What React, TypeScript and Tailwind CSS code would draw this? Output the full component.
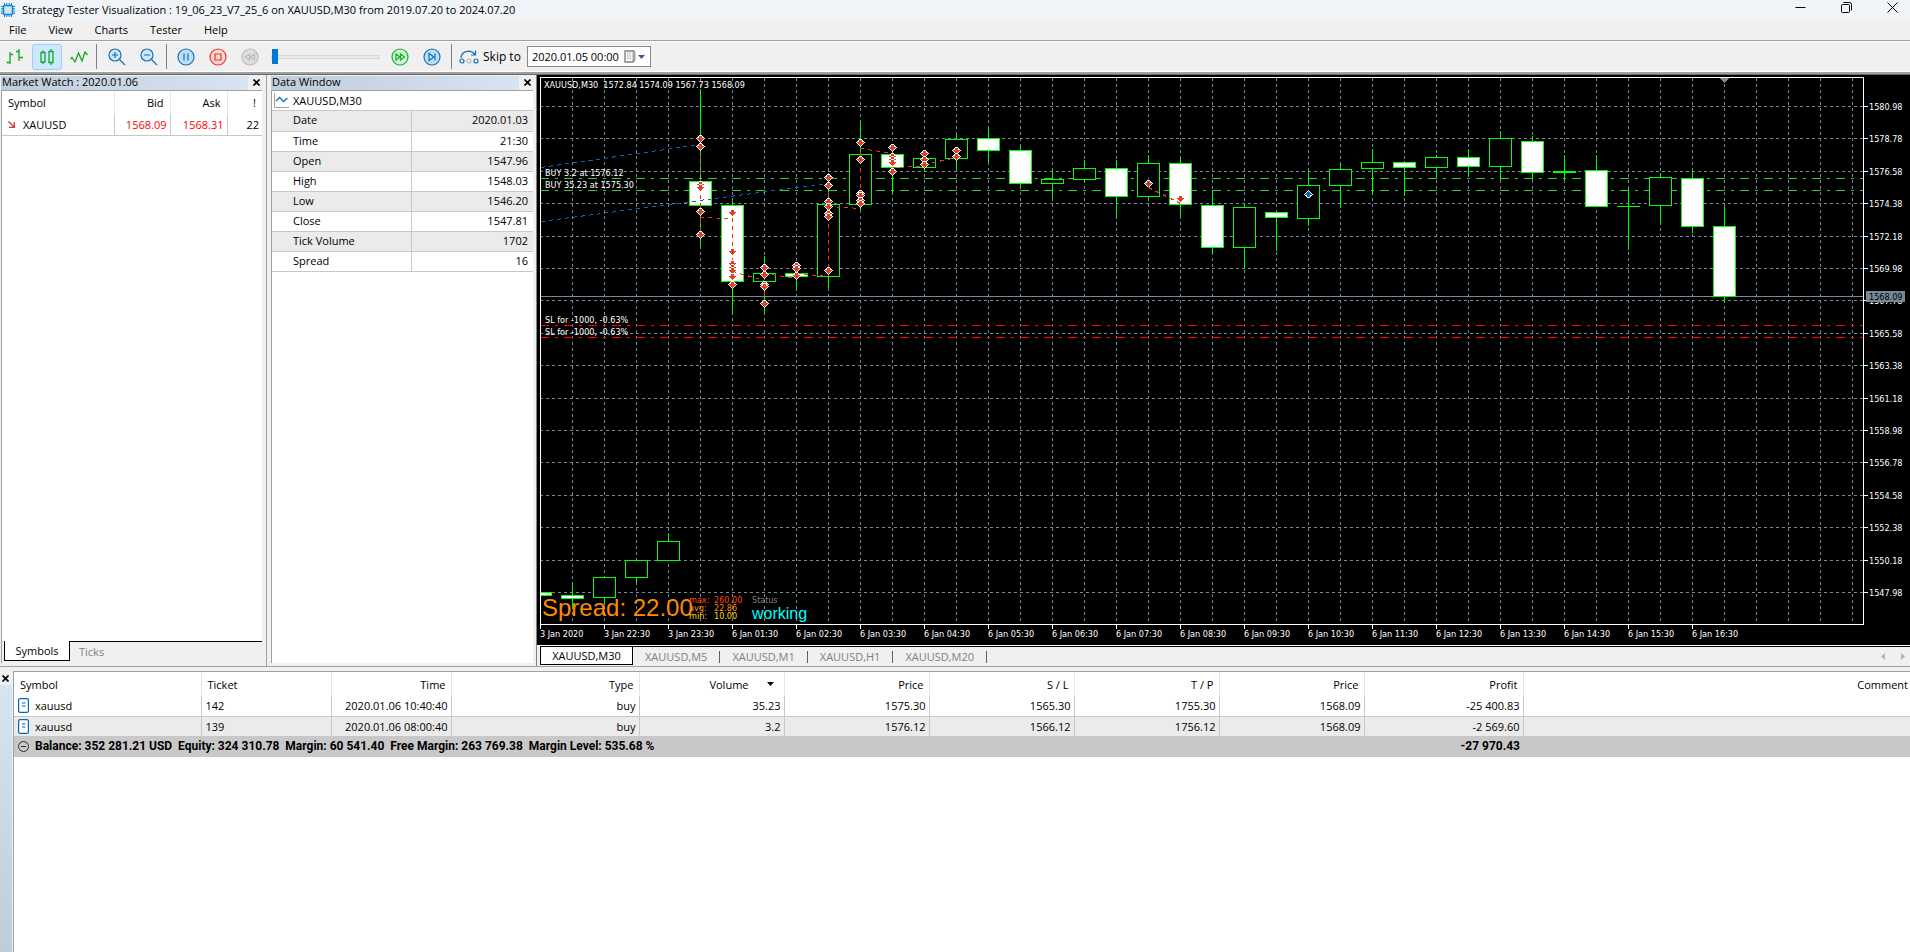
import React, { useState } from "react";

const GREEN = "#00ff00";
const SLATE = "#778899";
const SELL = "#e04020";
const BUY = "#0a64b4";

// bar: [high, bodyTop, bodyBottom, low, bearish]
type Bar = [number, number, number, number, boolean];

const bars: Bar[] = [
  [592, 592, 595, 595, true],
  [583, 595, 598, 608, true],
  [577, 577, 597, 604, false],
  [560, 560, 577, 583, false],
  [533, 541, 560, 560, false],
  [89, 181, 205, 245, true],
  [201, 205, 281, 313, true],
  [256, 273, 281, 313, false],
  [263, 273, 276, 289, true],
  [173, 204, 276, 287, false],
  [121, 154, 204, 209, false],
  [145, 154, 167, 193, true],
  [152, 158, 167, 171, false],
  [135, 139, 158, 169, false],
  [128, 138, 150, 161, true],
  [145, 150, 183, 187, true],
  [171, 179, 183, 197, false],
  [160, 168, 179, 182, false],
  [160, 168, 196, 217, true],
  [155, 163, 196, 198, false],
  [158, 163, 204, 216, true],
  [191, 205, 247, 253, true],
  [205, 207, 247, 267, false],
  [212, 212, 217, 250, true],
  [171, 185, 218, 225, false],
  [164, 169, 185, 207, false],
  [149, 162, 168, 194, false],
  [161, 162, 167, 195, true],
  [155, 157, 167, 177, false],
  [149, 157, 166, 175, true],
  [131, 138, 166, 179, false],
  [136, 141, 172, 179, true],
  [155, 171, 172, 180, false],
  [155, 170, 206, 206, true],
  [189, 206, 206, 249, false],
  [173, 177, 205, 221, false],
  [170, 178, 226, 232, true],
  [207, 226, 296, 302, true],
];

// sells: bar index -> levels
const sells: [number, number[]][] = [
  [5, [139, 147, 185, 188, 212, 235]],
  [6, [213, 252, 264, 268, 271, 277, 285]],
  [7, [268, 275, 285, 287, 304]],
  [8, [266, 269, 276]],
  [9, [178, 186, 202, 207, 214, 217, 271]],
  [10, [143, 160, 194, 196, 201, 204]],
  [11, [148, 157, 160, 163, 172]],
  [12, [154, 160, 165]],
  [13, [151, 157]],
  [19, [184]],
  [20, [199]],
];

const sellLinks = [
  "M700.5 147V235",
  "M700.5 217.5L732.5 218.5",
  "M732.5 218V285",
  "M732.5 271.5L764.5 280.5",
  "M764.5 268V308",
  "M764.5 273.5L796.5 278.5",
  "M796.5 273.5L828.5 276.5",
  "M828.5 276V186",
  "M828.5 206.5L860.5 208.5",
  "M860.5 204V148",
  "M860.5 148.5L892.5 153.5",
  "M892.5 154V172",
  "M892.5 167.5L924.5 166.5",
  "M924.5 164.5L956.5 157.5",
  "M1148.5 187.5L1180.5 203.5",
];

const barX = (i: number) => 540 + i * 32;
const gridY = (i: number) => 106 + Math.round(i * 32.4);

const prices = Array.from({ length: 16 }, (_, i) => (1580.98 - i * 2.2).toFixed(2));
const times = [
  "3 Jan 2020",
  "3 Jan 22:30",
  "3 Jan 23:30",
  ...Array.from({ length: 16 }, (_, i) => `6 Jan ${String(i + 1).padStart(2, "0")}:30`),
];

function Arrow({ x, y, color, up }: { x: number; y: number; color: string; up?: boolean }) {
  return (
    <g transform={`translate(${x} ${y})${up ? " scale(1 -1)" : ""}`}>
      <path
        d="M-1 -4H2V-3H3V-2H4V-1H5V0H4V1H3V2H2V3H1V4H0V3H-1V2H-2V1H-3V0H-4V-1H-3V-2H-2V-3H-1Z"
        fill="#fff"
      />
      <path d="M-1 -3H2V-1H4V0H3V1H2V2H1V3H0V2H-1V1H-2V0H-3V-1H-1Z" fill={color} />
    </g>
  );
}

function Chart() {
  return (
    <svg
      viewBox="537 75 1373 570"
      className="block w-full h-auto bg-black font-['DejaVu_Sans_Condensed','DejaVu_Sans',sans-serif] text-[9px]"
      shapeRendering="crispEdges"
      role="img"
      aria-label="XAUUSD M30 chart"
    >
      <defs>
        <clipPath id="plot">
          <rect x="541" y="78" width="1322" height="546" />
        </clipPath>
      </defs>

      <g stroke={SLATE} strokeDasharray="3 3">
        {Array.from({ length: 41 }, (_, i) => (
          <line key={i} x1={barX(i + 1) + 0.5} x2={barX(i + 1) + 0.5} y1="78" y2="624" />
        ))}
        {prices.map((p, i) => (
          <line key={p} x1="540" x2="1863" y1={gridY(i) + 0.5} y2={gridY(i) + 0.5} />
        ))}
      </g>

      <g strokeDasharray="9 6 3 6">
        <path d="M540 178.5H1863M540 190.5H1863" stroke="#32cd32" />
        <path d="M540 325.5H1863M540 337.5H1863" stroke="#ff0000" />
      </g>
      <path d="M540 296.5H1863" stroke={SLATE} />

      <g clipPath="url(#plot)">
        {bars.map(([high, top, bottom, low, bearish], i) => {
          const x = barX(i);
          return (
            <g key={i} stroke={GREEN}>
              <line x1={x + 0.5} x2={x + 0.5} y1={high} y2={low + 1} />
              <rect
                x={x - 10.5}
                y={top + 0.5}
                width="22"
                height={bottom - top}
                fill={bearish ? "#fff" : "#000"}
              />
              {bottom === top && <line x1={x - 11} x2={x + 12} y1={top + 0.5} y2={top + 0.5} />}
            </g>
          );
        })}

        <g fill="none" strokeDasharray="4 4">
          <path d="M541 167.5L700 144.5M541 221.5L828 183.5" stroke={BUY} />
          {sellLinks.map((d) => (
            <path key={d} d={d} stroke={SELL} />
          ))}
        </g>

        {sells.map(([i, levels]) =>
          levels.map((y) => <Arrow key={`${i}-${y}`} x={barX(i)} y={y} color={SELL} />)
        )}
        <path d="M1148.5 177V188" stroke={BUY} strokeDasharray="3 2" />
        <Arrow x={barX(24)} y={194} color={BUY} up />
      </g>

      <path d="M1720 78H1729L1724.5 83Z" fill={SLATE} />

      <path d="M540.5 624V77.5H1863.5V624.5H540" fill="none" stroke="#fff" />

      <g fill="#fff">
        {prices.map((p, i) => (
          <g key={p}>
            <rect x="1864" y={gridY(i)} width="4" height="1" />
            <text x="1869" y={gridY(i) + 4}>{p}</text>
          </g>
        ))}
        {times.map((t, i) => (
          <g key={t}>
            <rect x={540 + i * 64} y="625" width="1" height="4" />
            <text x={540 + i * 64} y="637">{t}</text>
          </g>
        ))}
        <text x="544" y="88">XAUUSD,M30&nbsp; 1572.84 1574.09 1567.73 1568.09</text>
        <text x="545" y="176">BUY 3.2 at 1576.12</text>
        <text x="545" y="188">BUY 35.23 at 1575.30</text>
        <text x="545" y="323">SL for -1000, -0.63%</text>
        <text x="545" y="335">SL for -1000, -0.63%</text>
      </g>

      <rect x="1866" y="291" width="39" height="11" fill={SLATE} />
      <text x="1869" y="300" fill="#000">1568.09</text>

      <text x="542" y="616" fill="#ff8c00" className="font-['Liberation_Sans',Arial,sans-serif] text-[24px]">
        Spread: 22.00
      </text>
      <g fill="#ff4500">
        <text x="689" y="603">max:</text>
        <text x="714" y="603">260.00</text>
      </g>
      <g fill="#ff8c00">
        <text x="689" y="611">avg:</text>
        <text x="714" y="611">22.86</text>
      </g>
      <g fill="#ffd700">
        <text x="689" y="619">min:</text>
        <text x="714" y="619">10.00</text>
      </g>
      <text x="752" y="603" fill="#808080">Status</text>
      <text x="752" y="619" fill="#00ffff" className="font-['Liberation_Sans',Arial,sans-serif] text-[16px]">
        working
      </text>
    </svg>
  );
}

function CloseIcon() {
  return (
    <svg width="7" height="7" viewBox="0 0 7 7" stroke="#000" strokeWidth="1.7">
      <path d="M0.5 0.5L6.5 6.5M6.5 0.5L0.5 6.5" />
    </svg>
  );
}

function PanelTitle({ title }: { title: string }) {
  return (
    <div className="flex h-[15px] items-center">
      <h2 className="h-[14px] flex-1 bg-linear-to-r from-[#bfcddb] to-[#d7e4f2] pl-px leading-[12px]">{title}</h2>
      <button aria-label={`Close ${title}`} className="flex w-[14px] justify-end pr-[2px]">
        <CloseIcon />
      </button>
    </div>
  );
}

function ToolButton({ label, active, children }: { label: string; active?: boolean; children: React.ReactNode }) {
  return (
    <button
      aria-label={label}
      className={`flex h-[26px] w-[30px] items-center justify-center rounded-[3px] border ${
        active ? "border-[#99d1ff] bg-[#cce8ff]" : "border-transparent"
      }`}
    >
      {children}
    </button>
  );
}

function Round({ stroke, fill, children }: { stroke: string; fill: string; children: React.ReactNode }) {
  return (
    <svg width="18" height="18" viewBox="0 0 18 18" fill="none" stroke={stroke} strokeWidth="1.2">
      <circle cx="9" cy="9" r="8" fill={fill} />
      {children}
    </svg>
  );
}

function Separator() {
  return <div className="h-[25px] w-px bg-[#808080]" />;
}

function Toolbar() {
  const [position, setPosition] = useState(0);
  const [date, setDate] = useState("2020.01.05 00:00");
  return (
    <div className="flex h-[30px] items-center border-b border-white bg-[#f0f0f0]">
      <div className="flex w-24 gap-[2px]">
        <ToolButton label="Bar chart">
          <svg width="18" height="17" viewBox="0 0 18 17" stroke="#16a52a" strokeWidth="1.3" fill="none">
            <path d="M4 4V16M0.5 14.5H4M4 6.5H7M13 1V13M10 3.5H13M13 9.5H17" />
          </svg>
        </ToolButton>
        <ToolButton label="Candlesticks" active>
          <svg width="16" height="18" viewBox="0 0 16 18" stroke="#16a52a" strokeWidth="1.3" fill="none">
            <path d="M2 4.5H6V14H2ZM4 2.5V4.5M4 14V16M10 3.5H14V14.5H10ZM12 1V3.5M12 14.5V17" />
          </svg>
        </ToolButton>
        <ToolButton label="Line chart">
          <svg width="18" height="12" viewBox="0 0 18 12" stroke="#16a52a" strokeWidth="1.3" fill="none">
            <path d="M0.5 8L2 6.5L5 11L8.5 2L12 10L15 1L17.5 4" />
          </svg>
        </ToolButton>
      </div>
      <Separator />
      <div className="flex w-[69px] justify-center gap-[2px] pl-[2px]">
        <ToolButton label="Zoom in">
          <svg width="18" height="18" viewBox="0 0 18 18" stroke="#1a6fb0" strokeWidth="1.2" fill="none">
            <circle cx="7" cy="7" r="6" fill="#cce6fa" />
            <path d="M11.5 11.5L17 17M7 4V10M4 7H10" />
          </svg>
        </ToolButton>
        <ToolButton label="Zoom out">
          <svg width="18" height="18" viewBox="0 0 18 18" stroke="#1a6fb0" strokeWidth="1.2" fill="none">
            <circle cx="7" cy="7" r="6" fill="#cce6fa" />
            <path d="M11.5 11.5L17 17M4 7H10" />
          </svg>
        </ToolButton>
      </div>
      <Separator />
      <div className="flex items-center gap-[2px] pl-1">
        <ToolButton label="Pause">
          <Round stroke="#1a6fb0" fill="#b8dffc">
            <path d="M7 5.5V12.5M11 5.5V12.5" />
          </Round>
        </ToolButton>
        <ToolButton label="Stop">
          <Round stroke="#dc3c32" fill="#fbd5d0">
            <path d="M6 6H12V12H6Z" />
          </Round>
        </ToolButton>
        <ToolButton label="Slower">
          <Round stroke="#bcbcbc" fill="#dedede">
            <path d="M8.5 6V12L4 9ZM13.5 6V12L9 9Z" />
          </Round>
        </ToolButton>
        <input
          type="range"
          aria-label="Speed"
          min="0"
          max="100"
          value={position}
          onChange={(e) => setPosition(Number(e.target.value))}
          className="ml-1 mr-1 h-[15px] w-[108px] appearance-none bg-transparent [&::-webkit-slider-runnable-track]:h-1 [&::-webkit-slider-runnable-track]:border [&::-webkit-slider-runnable-track]:border-[#d6d6d6] [&::-webkit-slider-runnable-track]:bg-[#e7eaea] [&::-webkit-slider-thumb]:mt-[-7px] [&::-webkit-slider-thumb]:h-[15px] [&::-webkit-slider-thumb]:w-[6px] [&::-webkit-slider-thumb]:appearance-none [&::-webkit-slider-thumb]:bg-[#0078d7]"
        />
        <ToolButton label="Faster">
          <Round stroke="#16b032" fill="#ccf5d0">
            <path d="M5 6V12L9 9ZM9.5 6V12L13.5 9Z" />
          </Round>
        </ToolButton>
        <ToolButton label="Next">
          <Round stroke="#1a6fb0" fill="#b8dffc">
            <path d="M6 5.5V12.5L11 9ZM12 5.5V12.5" />
          </Round>
        </ToolButton>
      </div>
      <div className="ml-1 flex items-center">
        <Separator />
        <label htmlFor="skip" className="flex items-center gap-1 pl-[7px] pr-[6px] text-[12px]">
          <svg width="20" height="14" viewBox="0 0 20 14" fill="none" stroke="#1a6fb0" strokeWidth="1.2">
            <path d="M2 8C2 1.500 11 -1.500 16 4.500M16.500 0.500V5H12" />
            <circle cx="3" cy="11" r="2" />
            <circle cx="10" cy="11" r="2" stroke="#b8b8b8" />
            <circle cx="17" cy="11" r="2" />
          </svg>
          Skip to
        </label>
        <div className="flex h-[21px] w-[124px] items-center justify-between border border-[#8a8a8a] bg-white pl-1 pr-[5px]">
          <input
            id="skip"
            value={date}
            onChange={(e) => setDate(e.target.value)}
            className="w-[88px] bg-transparent outline-none"
          />
          <button aria-label="Open calendar" className="flex items-center gap-[2px]">
            <svg width="12" height="13" viewBox="0 0 12 13">
              <path d="M1 1H10V10L8 12H1Z" fill="#fff" stroke="#8a8080" strokeWidth="1.4" />
              <path d="M11 2V11L9 12.500H2" fill="none" stroke="#a8a0a0" />
              <path d="M3 3.500H9M3 6H9M3 8.500H9" stroke="#a8b0bc" strokeDasharray="1.500 1" strokeWidth="1.500" />
            </svg>
            <svg width="7" height="4" viewBox="0 0 7 4">
              <path d="M0 0H7L3.500 4Z" fill="#3c5a82" />
            </svg>
          </button>
        </div>
      </div>
    </div>
  );
}

function MarketWatch() {
  return (
    <section className="flex w-[267px] flex-col border-r border-[#a0a0a0] pb-[3px] pl-[1px] pr-1">
      <PanelTitle title="Market Watch : 2020.01.06" />
      <div className="flex-1 border-l border-t border-[#a0a0a0] bg-white">
        <table className="w-full table-fixed">
          <thead>
            <tr className="h-6 *:pb-[2px]">
              <th className="w-[112px] pl-[6px] text-left font-normal">Symbol</th>
              <th className="w-14 border-l border-[#e5e5e5] pr-[6px] text-right font-normal">Bid</th>
              <th className="w-[57px] border-l border-[#e5e5e5] pr-[6px] text-right font-normal">Ask</th>
              <th className="border-l border-[#e5e5e5] pr-[6px] text-right font-normal">!</th>
            </tr>
          </thead>
          <tbody>
            <tr className="h-5 border-b border-[#c8c8c8]">
              <td className="pl-[6px]">
                <span className="flex items-center gap-2">
                  <svg width="7" height="7" viewBox="0 0 7 7" fill="none" stroke="#d23c32" strokeWidth="1.3">
                    <path d="M0.500 0.500L6 6M6.300 1V6.300H1" />
                  </svg>
                  XAUUSD
                </span>
              </td>
              <td className="border-l border-[#c8c8c8] pr-[3px] text-right text-[#ff0000]">1568.09</td>
              <td className="border-l border-[#c8c8c8] pr-[3px] text-right text-[#ff0000]">1568.31</td>
              <td className="border-l border-[#c8c8c8] pr-[3px] text-right">22</td>
            </tr>
          </tbody>
        </table>
      </div>
      <div className="flex h-[22px] border-l border-[#a0a0a0] pl-[2px]">
        <button className="h-5 w-[66px] border-x border-b border-black bg-white">Symbols</button>
        <div className="flex flex-1 border-t border-black">
          <button className="h-[18px] pl-[9px] text-[#808080]">Ticks</button>
        </div>
      </div>
    </section>
  );
}

const dataRows = [
  ["Date", "2020.01.03"],
  ["Time", "21:30"],
  ["Open", "1547.96"],
  ["High", "1548.03"],
  ["Low", "1546.20"],
  ["Close", "1547.81"],
  ["Tick Volume", "1702"],
  ["Spread", "16"],
];

function DataWindow() {
  return (
    <section className="flex w-[269px] flex-col pb-[3px] pl-1 pr-[3px]">
      <PanelTitle title="Data Window" />
      <div className="flex-1 border-l border-t border-[#a0a0a0] bg-white">
        <div className="flex h-5 items-center gap-1 border-b border-[#c8c8c8] pl-[2px]">
          <svg width="15" height="15" viewBox="0 0 15 15" fill="none">
            <path d="M0.500 0V14.500H15" stroke="#a0a0a0" />
            <path d="M2 8L5.500 4.500L9.500 8.500L13.500 5" stroke="#1a6fb0" strokeWidth="1.300" />
          </svg>
          XAUUSD,M30
        </div>
        <table className="w-full table-fixed">
          <tbody>
            {dataRows.map(([name, value]) => (
              <tr key={name} className="h-5 border-b border-[#c8c8c8] odd:bg-[#ebebeb] *:pb-[2px]">
                <th scope="row" className="w-[139px] pl-[21px] text-left font-normal">{name}</th>
                <td className="border-l border-[#c8c8c8] pr-[5px] text-right">{value}</td>
              </tr>
            ))}
          </tbody>
        </table>
      </div>
    </section>
  );
}

function ChartTabs() {
  return (
    <div className="flex h-[21px] items-start border-t border-white pl-[3px]">
      <div className="flex h-5 flex-1 items-start border-t border-black">
        <button className="h-[18px] w-[93px] border-x border-b border-black bg-white">XAUUSD,M30</button>
        {["XAUUSD,M5", "XAUUSD,M1", "XAUUSD,H1", "XAUUSD,M20"].map((tab) => (
          <button key={tab} className="my-1 border-r border-[#606060] px-3 leading-[12px] text-[#808080]">
            {tab}
          </button>
        ))}
        <div className="ml-auto flex gap-4 self-center pr-[5px]">
          <button aria-label="Scroll left">
            <svg width="4" height="7" viewBox="0 0 4 7"><path d="M4 0V7L0 3.500Z" fill="#b4b4b4" /></svg>
          </button>
          <button aria-label="Scroll right">
            <svg width="4" height="7" viewBox="0 0 4 7"><path d="M0 0V7L4 3.500Z" fill="#b4b4b4" /></svg>
          </button>
        </div>
      </div>
    </div>
  );
}

const trades = [
  ["142", "2020.01.06 10:40:40", "buy", "35.23", "1575.30", "1565.30", "1755.30", "1568.09", "-25 400.83"],
  ["139", "2020.01.06 08:00:40", "buy", "3.2", "1576.12", "1566.12", "1756.12", "1568.09", "-2 569.60"],
];

function Trades() {
  return (
    <section className="flex flex-1 pt-[4px]">
      <div className="flex w-[13px] flex-col">
        <button aria-label="Close toolbox" className="flex h-[14px] items-center pl-[2px]">
          <CloseIcon />
        </button>
        <div className="w-3 flex-1 bg-linear-to-b from-[#d7e4f2] to-[#bfcddb]" />
      </div>
      <div className="flex-1 border-l border-t border-[#a0a0a0] bg-white">
        <table className="w-full table-fixed">
          <colgroup>
            <col className="w-[187px]" />
            <col className="w-[130px]" />
            <col className="w-[120px]" />
            <col className="w-[188px]" />
            <col className="w-[145px]" />
            <col className="w-[145px]" />
            <col className="w-[145px]" />
            <col className="w-[145px]" />
            <col className="w-[145px]" />
            <col className="w-[159px]" />
            <col />
          </colgroup>
          <thead>
            <tr className="h-6 text-right *:border-[#e5e5e5] *:font-normal">
              <th className="pl-[6px] text-left">Symbol</th>
              <th className="border-l pl-[6px] text-left">Ticket</th>
              <th className="border-l pr-[5px]">Time</th>
              <th className="border-l pr-[5px]">Type</th>
              <th className="border-l pr-[10px]">
                <span className="flex items-center justify-end gap-[18px]">
                  Volume
                  <svg width="7" height="4" viewBox="0 0 7 4"><path d="M0 0H7L3.500 4Z" /></svg>
                </span>
              </th>
              <th className="border-l pr-[5px]">Price</th>
              <th className="border-l pr-[5px]">S / L</th>
              <th className="border-l pr-[5px]">T / P</th>
              <th className="border-l pr-[5px]">Price</th>
              <th className="border-l pr-[5px]">Profit</th>
              <th className="border-l pr-[2px]">Comment</th>
            </tr>
          </thead>
          <tbody>
            {trades.map(([ticket, ...cells]) => (
              <tr key={ticket} className="h-5 border-b border-[#c8c8c8] text-right even:bg-[#ebebeb] *:border-[#c8c8c8]">
                <td className="pl-1">
                  <span className="flex items-center gap-[6px]">
                    <svg width="11" height="15" viewBox="0 0 11 15" fill="#fff" stroke="#0a64b4" strokeWidth="1.200">
                      <rect x="0.600" y="0.600" width="9.800" height="13.800" rx="1.500" />
                      <path d="M4 5H7.500M4 8H7.500" />
                    </svg>
                    xauusd
                  </span>
                </td>
                <td className="border-l pl-1 text-left">{ticket}</td>
                {cells.map((cell, i) => (
                  <td key={i} className="border-l pr-[3px]">{cell}</td>
                ))}
                <td className="border-l" />
              </tr>
            ))}
            <tr className="h-[21px] bg-[#c8c8c8] font-['Roboto',sans-serif] text-[12px] font-bold">
              <td colSpan={9} className="pl-1">
                <span className="flex items-center gap-[6px] whitespace-pre">
                  <svg width="11" height="11" viewBox="0 0 11 11" fill="none" stroke="#303030">
                    <circle cx="5.500" cy="5.500" r="5" />
                    <path d="M3 5.500H8" />
                  </svg>
                  {"Balance: 352 281.21 USD  Equity: 324 310.78  Margin: 60 541.40  Free Margin: 263 769.38  Margin Level: 535.68 %"}
                </span>
              </td>
              <td className="pr-[3px] text-right">-27 970.43</td>
              <td />
            </tr>
          </tbody>
        </table>
      </div>
    </section>
  );
}

export default function App() {
  return (
    <div className="flex min-h-screen flex-col bg-[#f0f0f0] font-['Open_Sans','Noto_Sans',sans-serif] text-[11px] leading-[15px] text-black">
      <header className="flex h-5 items-center bg-[#f0f4f9] pl-[1px] pr-3">
        <svg width="14" height="14" viewBox="0 0 14 14" fill="none" stroke="#1482d2">
          <path d="M3.500 0V14M5.800 0V14M8.200 0V14M10.500 0V14M0 3.500H14M0 5.800H14M0 8.200H14M0 10.500H14" />
          <rect x="2.500" y="2.500" width="9" height="9" rx="1" fill="#cce6fa" strokeWidth="1.500" />
        </svg>
        <h1 className="flex-1 pb-[2px] pl-[7px]">
          Strategy Tester Visualization : 19_06_23_V7_25_6 on XAUUSD,M30 from 2019.07.20 to 2024.07.20
        </h1>
        <div className="flex gap-[35px] pb-[5px]">
          <button aria-label="Minimize">
            <svg width="11" height="11" viewBox="0 0 11 11" stroke="#000"><path d="M0.500 5.500H10.500" /></svg>
          </button>
          <button aria-label="Restore">
            <svg width="11" height="11" viewBox="0 0 11 11" fill="none" stroke="#000">
              <rect x="0.500" y="2.500" width="8" height="8" rx="1" />
              <path d="M2.500 0.500H8.500Q10.500 0.500 10.500 2.500V8.500" />
            </svg>
          </button>
          <button aria-label="Close">
            <svg width="11" height="11" viewBox="0 0 11 11" stroke="#000"><path d="M0.500 0.500L10.500 10.500M10.500 0.500L0.500 10.500" /></svg>
          </button>
        </div>
      </header>
      <nav className="flex h-[21px] items-center gap-[22px] border-b border-[#a0a0a0] pb-[2px] pl-[9px]">
        {["File", "View", "Charts", "Tester", "Help"].map((item) => (
          <button key={item}>{item}</button>
        ))}
      </nav>
      <div className="border-t border-white">
        <Toolbar />
      </div>
      <div className="h-[3px] border-b border-[#696969] bg-[#a0a0a0]" />
      <main className="flex">
        <MarketWatch />
        <DataWindow />
        <section className="min-w-0 flex-1 border-l border-[#808080]">
          <Chart />
          <ChartTabs />
        </section>
      </main>
      <div className="border-t border-[#a0a0a0]" />
      <Trades />
    </div>
  );
}
